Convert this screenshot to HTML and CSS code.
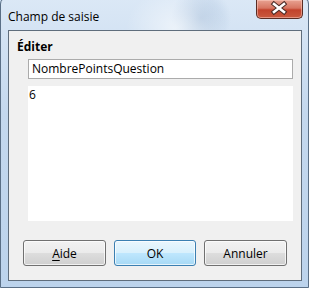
FILE: index.html
```html
<!DOCTYPE html>
<html lang="fr">
<head>
    <meta charset="UTF-8">
    <title>Champ de saisie</title>
    <link rel="stylesheet" href="styles.css">
</head>
<body>
    <div class="window">
        <div class="titlebar">
            <span class="title">Champ de saisie</span>
            <div class="close-btn">
                <svg width="47" height="19" viewBox="0 0 47 19">
                    <path d="M18 5 L28 13 M28 5 L18 13" stroke="#4a2a25" stroke-width="4.6" stroke-linecap="square" fill="none"/>
                    <path d="M18 5 L28 13 M28 5 L18 13" stroke="#fff" stroke-width="2.6" stroke-linecap="square" fill="none"/>
                </svg>
            </div>
        </div>
        <div class="client">
            <div class="group-title">Éditer</div>
            <div class="field">NombrePointsQuestion</div>
            <div class="text-area">6</div>
            <div class="buttons">
                <button type="button" class="btn"><u>A</u>ide</button>
                <button type="button" class="btn btn-default">OK</button>
                <button type="button" class="btn">Annuler</button>
            </div>
        </div>
    </div>
</body>
</html>
```

FILE: styles.css
```css
body {
    margin: 0;
    padding: 0;
    width: 309px;
    height: 288px;
    overflow: hidden;
    font-family: "Open Sans", "Liberation Sans", sans-serif;
    font-size: 12px;
    color: #000;
    background: #c8dbef;
}

.window {
    position: relative;
    width: 309px;
    height: 291px;
    margin-top: -3px;
    box-sizing: border-box;
    border: 1px solid #5a6f86;
    border-radius: 7px 7px 0 0;
    background:
        radial-gradient(ellipse 50px 40px at 175px 30px, rgba(255, 255, 255, 0.55), rgba(255, 255, 255, 0) 100%),
        radial-gradient(ellipse 30px 30px at 200px 20px, rgba(140, 170, 205, 0.5), rgba(140, 170, 205, 0) 100%),
        linear-gradient(180deg, #dbe8f6 0%, #c4d8ee 40%, #bcd3ec 100%);
}

.titlebar {
    display: flex;
    justify-content: space-between;
    align-items: flex-start;
    height: 32px;
}

.title {
    margin: 10px 0 0 7px;
    font-family: "Open Sans", sans-serif;
    font-size: 12px;
    color: #000;
}

.close-btn {
    width: 47px;
    height: 19px;
    margin: 2px 5px 0 0;
    box-sizing: border-box;
    border: 1px solid #5a2d24;
    border-top: none;
    border-radius: 0 0 5px 5px;
    background: linear-gradient(180deg, #e8a392 0%, #d77561 45%, #c2432c 55%, #c95a3f 100%);
    box-shadow: inset 0 0 0 1px rgba(255, 210, 200, 0.5);
}

.close-btn svg {
    display: block;
    margin: -1px 0 0 -1px;
}

.client {
    margin: 0 6px 0 7px;
    height: 251px;
    box-sizing: border-box;
    border: 1px solid #5f6d7c;
    background: #f0f0f0;
    padding: 8px 0 0 0;
    display: flex;
    flex-direction: column;
}

.group-title {
    margin-left: 8px;
    font-weight: bold;
    line-height: 15px;
}

.field {
    margin: 5px 8px 0 19px;
    height: 20px;
    box-sizing: border-box;
    border: 1px solid #ababab;
    background: #fff;
    padding: 0 3px;
    line-height: 18px;
}

.text-area {
    margin: 7px 8px 0 19px;
    height: 134px;
    background: #fff;
    padding: 1px 1px 0;
    line-height: 16px;
}

.buttons {
    display: flex;
    gap: 8px;
    margin: 19px 0 0 14px;
}

.btn {
    width: 83px;
    height: 26px;
    border: 1px solid #707070;
    border-radius: 3px;
    background: linear-gradient(180deg, #f2f2f2 0%, #ebebeb 48%, #dddddd 52%, #cfcfcf 100%);
    box-shadow: inset 0 0 0 1px rgba(255, 255, 255, 0.7);
    font-family: "Open Sans", sans-serif;
    font-size: 12px;
    color: #000;
    padding: 0;
}

.btn u {
    text-decoration-thickness: 1px;
    text-underline-offset: 2px;
}

.btn-default {
    width: 82px;
    border-color: #3c7fb1;
    background: linear-gradient(180deg, #eaf6fd 0%, #d9f0fc 48%, #bee6fd 52%, #a7d9f5 100%);
}
```
